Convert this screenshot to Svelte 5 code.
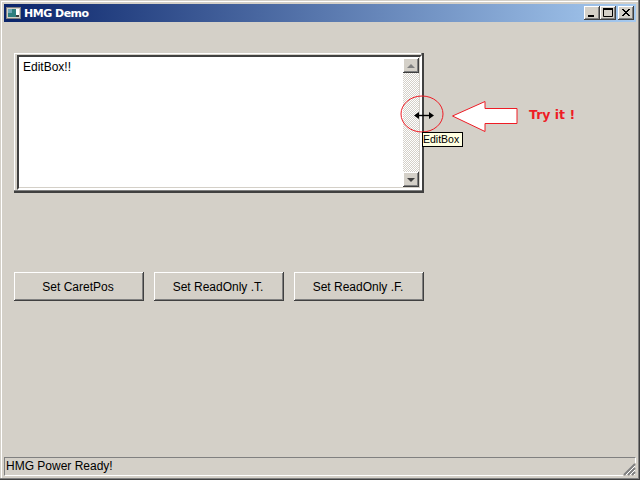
<script>
	const buttons = ['Set CaretPos', 'Set ReadOnly .T.', 'Set ReadOnly .F.'];
	let text = $state('EditBox!!');
</script>

<div class="window">
	<div class="titlebar">
		<svg class="appicon" width="15" height="12" viewBox="0 0 15 12">
			<rect x="0.5" y="0.5" width="14" height="11" fill="#d4d0c8" stroke="#808080" />
			<rect x="2" y="2" width="11" height="8" fill="#fff" />
			<rect x="2" y="2" width="8" height="8" fill="#2f7f7f" />
			<rect x="2" y="2" width="4" height="4" fill="#6fa8b8" />
			<rect x="10" y="8" width="3" height="2" fill="#404040" />
		</svg>
		<span class="title">HMG Demo</span>
		<div class="controls">
			<button class="ctl" aria-label="Minimize">
				<svg width="16" height="14" viewBox="0 0 16 14"><rect x="4" y="9" width="6" height="2" fill="#000" /></svg>
			</button>
			<button class="ctl" aria-label="Maximize">
				<svg width="16" height="14" viewBox="0 0 16 14"><path d="M3.5 2.5h9v8h-9z" fill="none" stroke="#000" /><rect x="3" y="2" width="10" height="2" fill="#000" /></svg>
			</button>
			<button class="ctl close" aria-label="Close">
				<svg width="16" height="14" viewBox="0 0 16 14"><path d="M4 3l7 7M5 3l7 7M11 3l-7 7M12 3l-7 7" stroke="#000" fill="none" /></svg>
			</button>
		</div>
	</div>

	<div class="client">
		<div class="editbox">
			<div class="editinner">
				<div class="edittext">{text}</div>
				<div class="scrollbar">
					<div class="sbtn"><span class="tri up"></span></div>
					<div class="track"></div>
					<div class="sbtn"><span class="tri down"></span></div>
				</div>
			</div>
		</div>

		<div class="buttons">
			{#each buttons as label}
				<button class="btn">{label}</button>
			{/each}
		</div>
	</div>

	<div class="statusbar">
		<div class="status">HMG Power Ready!</div>
		<svg class="grip" width="13" height="13" viewBox="0 0 13 13">
			<path d="M12 1L1 12M12 5L5 12M12 9L9 12" stroke="#808080" stroke-width="2" fill="none" />
			<path d="M12 3L3 12M12 7L7 12M12 11L11 12" stroke="#fff" fill="none" />
		</svg>
	</div>

	<svg class="marks" width="640" height="480" viewBox="0 0 640 480">
		<ellipse cx="422" cy="114" rx="21" ry="18" fill="none" stroke="#ee1c25" />
		<path d="M452.5 116L485 101.5V108.5H517V123.5H485V131.5Z" fill="#fff" stroke="#ee1c25" />
		<path d="M417 115.5H431" stroke="#000" stroke-width="1.4" />
		<path d="M414 115.5L419 112V119Z M434 115.5L429 112V119Z" fill="#000" />
	</svg>
	<div class="tryit">Try it !</div>
	<div class="tooltip">EditBox</div>
</div>

<style>
	:global(body) {
		background: #d4d0c8;
	}

	.window {
		position: relative;
		box-sizing: border-box;
		width: 640px;
		height: 480px;
		display: flex;
		flex-direction: column;
		background: #d4d0c8;
		padding: 4px 4px 4px;
		font-family: 'Liberation Sans', Arial, sans-serif;
		font-size: 12px;
		color: #000;
		overflow: hidden;
		box-shadow:
			inset -1px -1px 0 #404040,
			inset -2px -2px 0 #808080,
			inset 1px 1px 0 #d4d0c8,
			inset 2px 2px 0 #fff;
	}

	.titlebar {
		height: 18px;
		flex: none;
		display: flex;
		align-items: center;
		padding: 0 2px;
		background: linear-gradient(90deg, #0a246a, #a6caf0);
	}

	.appicon {
		margin-right: 3px;
	}

	.title {
		color: #fff;
		font-family: 'DejaVu Sans', Tahoma, sans-serif;
		font-weight: bold;
		font-size: 11px;
		letter-spacing: -0.5px;
	}

	.controls {
		margin-left: auto;
		display: flex;
	}

	.ctl {
		width: 16px;
		height: 14px;
		padding: 0;
		border: none;
		display: block;
		background: #d4d0c8;
		box-shadow:
			inset -1px -1px 0 #404040,
			inset 1px 1px 0 #fff,
			inset -2px -2px 0 #808080;
	}

	.ctl svg {
		display: block;
	}

	.close {
		margin-left: 2px;
	}

	.client {
		flex: 1;
		display: flex;
		flex-direction: column;
		padding: 31px 0 0 10px;
	}

	.editbox {
		box-sizing: border-box;
		width: 410px;
		height: 140px;
		padding: 2px 2px 3px 3px;
		background: #d4d0c8;
		box-shadow:
			inset -2px -2px 0 #404040,
			inset -3px -3px 0 #808080,
			inset 1px 1px 0 #fff;
	}

	.editinner {
		box-sizing: border-box;
		height: 100%;
		display: flex;
		padding: 1px 1px 1px 0;
		background: #fff;
		border: 2px solid #404040;
		border-right-color: #fff;
		border-bottom-color: #fff;
		box-shadow: inset -1px -1px 0 #d4d0c8;
	}

	.edittext {
		flex: 1;
		padding: 2px 4px;
		line-height: 14px;
	}

	.scrollbar {
		width: 16px;
		flex: none;
		display: flex;
		flex-direction: column;
	}

	.track {
		flex: 1;
		background: conic-gradient(#d4d0c8 25%, #fff 0 50%, #d4d0c8 0 75%, #fff 0) 0 0 / 2px 2px;
	}

	.sbtn {
		height: 15px;
		flex: none;
		display: flex;
		align-items: center;
		justify-content: center;
		background: #d4d0c8;
		box-shadow:
			inset -1px -1px 0 #404040,
			inset 1px 1px 0 #fff,
			inset -2px -2px 0 #808080;
	}

	.tri {
		width: 0;
		height: 0;
		border-left: 4px solid transparent;
		border-right: 4px solid transparent;
	}

	.tri.up {
		border-bottom: 4px solid #808080;
	}

	.tri.down {
		border-top: 4px solid #404040;
	}

	.buttons {
		display: flex;
		gap: 10px;
		margin-top: 79px;
	}

	.btn {
		box-sizing: border-box;
		width: 130px;
		height: 29px;
		padding: 0 2px 0 0;
		border: none;
		background: #d4d0c8;
		font: 12px 'Liberation Sans', Arial, sans-serif;
		color: #000;
		box-shadow:
			inset -1px -1px 0 #404040,
			inset 1px 1px 0 #fff,
			inset -2px -2px 0 #808080;
	}

	.statusbar {
		flex: none;
		height: 19px;
		display: flex;
		position: relative;
	}

	.status {
		flex: 1;
		box-sizing: border-box;
		padding: 1px 1px 0;
		line-height: 15px;
		border: 1px solid #808080;
		border-right-color: #fff;
		border-bottom-color: #fff;
	}

	.grip {
		position: absolute;
		right: 0;
		bottom: 0;
		background: #d4d0c8;
	}

	.marks {
		position: absolute;
		left: 0;
		top: 0;
		pointer-events: none;
	}

	.tryit {
		position: absolute;
		left: 529px;
		top: 107px;
		color: #ee1c25;
		font-family: 'DejaVu Sans', Verdana, sans-serif;
		font-weight: bold;
		font-size: 12.5px;
		line-height: 16px;
	}

	.tooltip {
		position: absolute;
		left: 422px;
		top: 132px;
		box-sizing: border-box;
		width: 41px;
		height: 15px;
		border: 1px solid #000;
		background: #ffffe1;
		font-size: 10.5px;
		line-height: 13px;
		padding-left: 0;
		white-space: nowrap;
	}
</style>
